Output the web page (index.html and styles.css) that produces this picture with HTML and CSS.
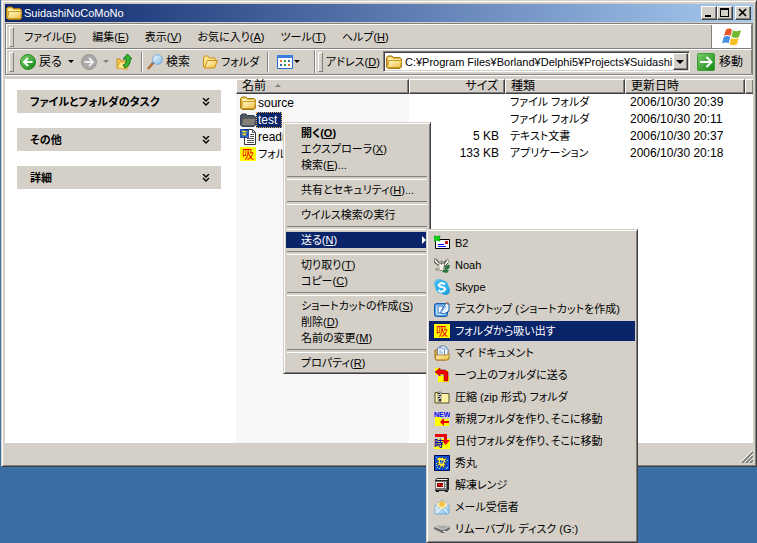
FILE: index.html
```html
<!DOCTYPE html>
<html lang="ja">
<head>
<meta charset="utf-8">
<title>SuidashiNoCoMoNo</title>
<link rel="stylesheet" href="styles.css">
</head>
<body>
<svg class="defs" aria-hidden="true">
  <defs>
    <linearGradient id="gold" x1="0" y1="0" x2="1" y2="1"><stop offset="0" stop-color="#fffbd0"/><stop offset="1" stop-color="#f0bd3c"/></linearGradient>
    <linearGradient id="green" x1="0" y1="0" x2="1" y2="1"><stop offset="0" stop-color="#7bd06a"/><stop offset="1" stop-color="#128512"/></linearGradient>
    <linearGradient id="sky" x1="0" y1="0" x2="1" y2="1"><stop offset="0" stop-color="#f4fcff"/><stop offset="1" stop-color="#7dbbe6"/></linearGradient>
    <symbol id="folder" viewBox="0 0 16 16">
      <path d="M.5 13V3.500L2 2h4l1.500 1.500H14L15.500 5v8L14 14.500H2z" fill="#e9b43c" stroke="#a77b13"/>
      <path d="M2 5V3.500h4L7.500 5H14v1H2z" fill="#fff3a8"/>
      <path d="M1.500 13.500 3 6.500h12.500l-1 7z" fill="url(#gold)" stroke="#c99829"/>
    </symbol>
    <symbol id="folder-open" viewBox="0 0 16 16">
      <path d="M1.500 13V3.500L3 2h3l1.500 2H13v9z" fill="#fbe28b" stroke="#d08d16"/>
      <path d="M2.500 14 5.500 6.500h10L12.500 14z" fill="url(#gold)" stroke="#d08d16"/>
    </symbol>
    <symbol id="hidemaru" viewBox="0 0 16 16">
      <path d="M.5.5h15v15H.5z" fill="#0a50e8" stroke="#000a50"/>
      <path d="M2 5 5 2l2 1 2-1 1 2 4-2-3 4 3 1-4 1 3 3-3-1 1 4-3-3-2 3v-4l-4 2 3-4-3 1 3-3-2-1z" fill="#ffee31" stroke="#000c6b" stroke-width=".5"/>
      <path d="m6 5 2 1 2-1-1 3-2 1-1-2z" fill="#0a50e8"/>
      <path d="M7 7h1v1H7zM3 12h1v1H3zm9 1h1v1h-1zM2 8h1v1H2z" fill="#ffee31"/>
      <path d="M2 2h1v1H2zm11 3h1v1h-1zM2 10h1v1H2zm3 3h1v1H5zm8-1h1v1h-1z" fill="#6ff"/>
    </symbol>
    <symbol id="chevrons" viewBox="0 0 8 8"><path d="m1 0 3 3 3-3M1 4l3 3 3-3" fill="none" stroke="#000" stroke-width="1.400"/></symbol>
  </defs>
</svg>

<main class="window">
  <header class="titlebar">
    <svg class="icon"><use href="#folder"/></svg>
    <h1>SuidashiNoCoMoNo</h1>
    <div class="caption-buttons">
      <button type="button" aria-label="最小化"><svg viewBox="0 0 12 10"><path d="M2 7h6v2H2z"/></svg></button>
      <button type="button" aria-label="最大化"><svg viewBox="0 0 12 10"><path d="M1 0h9v9H1zm1 2v6h7V2z" fill-rule="evenodd"/></svg></button>
      <button type="button" class="close" aria-label="閉じる"><svg viewBox="0 0 12 10"><path d="m2 1 7 7m0-7L2 8" stroke="#000" stroke-width="1.700"/></svg></button>
    </div>
  </header>

  <div class="bars">
    <div class="bar menu-row">
      <nav class="menubar grip">
        <button type="button">ファイル(<u>F</u>)</button>
        <button type="button">編集(<u>E</u>)</button>
        <button type="button">表示(<u>V</u>)</button>
        <button type="button">お気に入り(<u>A</u>)</button>
        <button type="button">ツール(<u>T</u>)</button>
        <button type="button">ヘルプ(<u>H</u>)</button>
      </nav>
      <div class="brand">
        <svg viewBox="0 0 20 18">
          <path d="M4 1.500q3.500-2 6 .2L8.500 8Q5.500 6 2 7.800z" fill="#e9572b"/>
          <path d="M11 2.300q3 2 8 0L17 9q-4 2-7.500-.2z" fill="#76b82f"/>
          <path d="M1.800 9q3-2 6.500 0l-1.700 6.300Q4 13.500 0 15.300z" fill="#4a8fe0"/>
          <path d="M9.200 10q4 2 7.500 0L15 16.300q-4 2-7.500-.3z" fill="#f8bf22"/>
        </svg>
      </div>
    </div>
    <div class="bar tool-row">
      <div class="toolbar grip">
        <button type="button" class="back"><svg class="icon" viewBox="0 0 16 16"><circle cx="8" cy="8" r="7.500" fill="url(#green)" stroke="#278c22"/><path d="M12.500 8H4.500M8 4 4 8l4 4" stroke="#fff" stroke-width="2" fill="none"/></svg>戻る</button>
        <button type="button" class="drop" aria-label="戻るの履歴"><i class="tri"></i></button>
        <button type="button" class="forward" aria-label="進む"><svg class="icon" viewBox="0 0 16 16"><circle cx="8" cy="8" r="7.500" fill="#aaa9a7" stroke="#969592"/><path d="M3.500 8h8M8 4l4 4-4 4" stroke="#eee" stroke-width="2" fill="none"/></svg></button>
        <button type="button" class="drop" aria-label="進むの履歴"><i class="tri dim"></i></button>
        <button type="button" class="up" aria-label="上へ"><svg class="icon" viewBox="0 0 16 16"><path d="M1 14V5h3l1 2h6v8z" fill="#f7ce51" stroke="#c78d18"/><path d="m1 14 3-6h10l-3 7z" fill="#ffe68a" stroke="#dba52d"/><path d="M7 11q4-1 3-6H7l4.500-5L16 5h-2q1 6-5 9z" fill="#36b52e" stroke="#16731b"/></svg></button>
        <span class="rule"></span>
        <button type="button" class="search"><svg class="icon" viewBox="0 0 16 16"><path d="m6 9-5 6" stroke="#b97135" stroke-width="2.600"/><path d="m7 8-2 2" stroke="#777" stroke-width="2"/><circle cx="10.500" cy="5.500" r="4.800" fill="url(#sky)" stroke="#75a7dd"/></svg>検索</button>
        <button type="button" class="folders"><svg class="icon"><use href="#folder-open"/></svg>フォルダ</button>
        <span class="rule"></span>
        <button type="button" class="views" aria-label="表示"><svg class="icon" viewBox="0 0 16 16"><path d="M.5 1.500h15v13H.5z" fill="#fff" stroke="#2868cf"/><path d="M0 1h16v3H0z" fill="#3c7ce1"/><path d="M3 6h2v2H3zm8 4h2v2h-2z" fill="#e66b28"/><path d="M7 6h2v2H7zm0 4h2v2H7z" fill="#2e9d47"/><path d="M11 6h2v2h-2zM3 10h2v2H3z" fill="#3265a8"/></svg><i class="tri"></i></button>
      </div>
      <form class="address grip">
        <label for="addr">アドレス(<u>D</u>)</label>
        <div class="combo">
          <svg class="icon"><use href="#folder"/></svg>
          <input id="addr" type="text" value="C:¥Program Files¥Borland¥Delphi5¥Projects¥SuidashiNoCoMoNo">
          <button type="button" aria-label="アドレス一覧"><i class="tri big"></i></button>
        </div>
        <button type="button" class="go"><svg viewBox="0 0 18 18"><rect x=".5" y=".5" width="17" height="17" rx="1" fill="url(#green)" stroke="#3b9d36"/><path d="M3 9h11M9.500 4l5 5-5 5" fill="none" stroke="#fff" stroke-width="2"/></svg>移動</button>
      </form>
    </div>
  </div>

  <div class="content">
    <aside class="tasks">
      <button type="button">ファイルとフォルダのタスク<svg><use href="#chevrons"/></svg></button>
      <button type="button">その他<svg><use href="#chevrons"/></svg></button>
      <button type="button">詳細<svg><use href="#chevrons"/></svg></button>
    </aside>
    <section class="files">
      <table>
        <colgroup><col class="c-name"><col class="c-size"><col class="c-type"><col class="c-date"><col></colgroup>
        <thead>
          <tr><th>名前 <i class="sort"></i></th><th class="num">サイズ</th><th>種類</th><th>更新日時</th><th></th></tr>
        </thead>
        <tbody>
          <tr><td><div class="file"><svg class="icon"><use href="#folder"/></svg><span>source</span></div></td><td class="num"></td><td class="type">ファイル フォルダ</td><td>2006/10/30 20:39</td><td></td></tr>
          <tr><td><div class="file selected"><svg class="icon" viewBox="0 0 16 16"><path d="M.5 13V3.500L2 2h4l1.500 1.500H14L15.500 5v8L14 14.500H2z" fill="#51565d" stroke="#33435d"/><path d="M1.500 13.500 3 6.500h12.500l-1 7z" fill="#858179" stroke="#5a5d64"/></svg><span>test</span></div></td><td class="num"></td><td class="type">ファイル フォルダ</td><td>2006/10/30 20:11</td><td></td></tr>
          <tr><td><div class="file"><svg class="icon" viewBox="0 0 16 16"><path d="M4.500.5h8l3 3v12h-11z" fill="#fff" stroke="#333"/><path d="M12.500.5v3h3M10 5.500h4M10 7.500h4M7 9.500h7M7 11.500h7M7 13.500h7" fill="none" stroke="#555"/><use href="#hidemaru" width="9" height="9"/></svg><span>readme</span></div></td><td class="num">5 KB</td><td class="type">テキスト文書</td><td>2006/10/30 20:37</td><td></td></tr>
          <tr><td><div class="file"><b class="icon sui">吸</b><span class="type">フォルダ</span></div></td><td class="num">133 KB</td><td class="type">アプリケーション</td><td>2006/10/30 20:18</td><td></td></tr>
        </tbody>
      </table>
    </section>
  </div>
  <footer class="status"><svg viewBox="0 0 12 12"><path d="M1 12 12 1M5 12l7-7M9 12l3-3" stroke="#808080" stroke-width="2"/><path d="M0 11 11 0M4 11l8-8M8 11l4-4" stroke="#fff"/></svg></footer>
</main>

<menu class="popup context">
  <li><button type="button"><b>開く(<u>O</u>)</b></button></li>
  <li><button type="button">エクスプローラ(<u>X</u>)</button></li>
  <li><button type="button">検索(<u>E</u>)...</button></li>
  <li class="separator"></li>
  <li><button type="button">共有とセキュリティ(<u>H</u>)...</button></li>
  <li class="separator"></li>
  <li><button type="button">ウイルス検索の実行</button></li>
  <li class="separator"></li>
  <li><button type="button" class="active">送る(<u>N</u>)<i class="more"></i></button></li>
  <li class="separator"></li>
  <li><button type="button">切り取り(<u>T</u>)</button></li>
  <li><button type="button">コピー(<u>C</u>)</button></li>
  <li class="separator"></li>
  <li><button type="button">ショートカットの作成(<u>S</u>)</button></li>
  <li><button type="button">削除(<u>D</u>)</button></li>
  <li><button type="button">名前の変更(<u>M</u>)</button></li>
  <li class="separator"></li>
  <li><button type="button">プロパティ(<u>R</u>)</button></li>
</menu>

<menu class="popup sendto">
  <li><button type="button"><svg class="icon" viewBox="0 0 16 16"><path d="M1.500 4.500h14v9h-14z" fill="#fff" stroke="#000"/><path d="M11 6h3v3h-3z" fill="#d01818"/><path d="M4 9h6v1H4zm0 2h8v1H4z" fill="#11f"/><path d="M0 1h2l1 1 1-1h2v2L5 4l1 1v1H4L3 5 2 6H0V5l1-1-1-1z" fill="#0bd80b" stroke="#079307" stroke-width=".5"/></svg>B2</button></li>
  <li><button type="button"><svg class="icon" viewBox="0 0 16 16"><path d="M0 1q4 0 5 4 3-3 5 0l4-4 1 4-3 4-1 5H6L4 9 0 6z" fill="#8c9186"/><path d="m1 2 4 4-1 2-3-3zm13 0-3 5v2l3-3z" fill="#f3f3ec"/><path d="M6 6q2-2 4 1l-1 6H6l-1-4z" fill="#f1f1ea"/><path d="M7 6h1v1H7zM0 4l4 4M2 2l3 4M12 3l-2 4m4-1-4 4" stroke="#4a4f49" fill="#111"/><path d="M11 10q4-4 5-1-1 4-5 4zM10 13h5l-2 3-5-1z" fill="#28743d"/><path d="M1 11h3l1 3H2z" fill="#9c9f89"/></svg>Noah</button></li>
  <li><button type="button"><svg class="icon" viewBox="0 0 16 16"><circle cx="5" cy="5" r="5" fill="#55bff0"/><circle cx="11.500" cy="11.500" r="4.500" fill="#229edc"/><circle cx="8" cy="8" r="6.700" fill="#2eb1ed"/><path d="M11 5.500Q8 3 5.500 5T8 8t2 3.500T4.500 11" fill="none" stroke="#fff" stroke-width="2"/></svg>Skype</button></li>
  <li><button type="button"><svg class="icon" viewBox="0 0 16 16"><rect x=".5" y="2.500" width="13" height="13" rx="2" fill="#4d9be0" stroke="#155cac"/><rect x="2" y="4" width="10" height="10" rx="2" fill="#c9e5fa"/><path d="M4 5h5v7H4z" fill="#fff" stroke="#2672bd"/><path d="m7 10 5-8 3 1v7l-5 3-3-1z" fill="#e6f3ff" stroke="#1c62ab"/><path d="m8 10 4-5" stroke="#4e91d0"/><path d="m12 2 2-1 1 2-1 1z" fill="#c55a43"/></svg>デスクトップ (ショートカットを作成)</button></li>
  <li><button type="button" class="active"><b class="icon sui">吸</b>フォルダから吸い出す</button></li>
  <li><button type="button"><svg class="icon" viewBox="0 0 16 16"><path d="M1 5h13v9l-2 1H2l-1-2z" fill="#dca635" stroke="#a67322"/><path d="M6 1h5l3 3v8H6z" fill="#fff" stroke="#607eab"/><path d="M3.500 3h5l2 2v7h-7z" fill="#eef6ff" stroke="#6987b2"/><path d="M5 6h3M5 8h4M11 1v3h3" fill="none" stroke="#7cabda"/><path d="M1 10h12l2-2v6l-2 1H2z" fill="url(#gold)" stroke="#ad7e26"/></svg>マイ ドキュメント</button></li>
  <li><button type="button"><svg class="icon" viewBox="0 0 16 16"><path d="M1 1h5v2h8v5H1zm3 8h11v6H4z" fill="#ff0"/><path d="m1 5 5-4v2h5l3 2v9h-4V7H6v2z" fill="#f00000" stroke="#850000" stroke-width=".6"/></svg>一つ上のフォルダに送る</button></li>
  <li><button type="button"><svg class="icon" viewBox="0 0 16 16"><path d="M1 3.500h5l2 1h7v9.500H1z" fill="#ffe77d" stroke="#55563a"/><path d="M2 5h12v8H2z" fill="#fff1a2"/><path d="M4 3h3v10H4z" fill="#ddd" stroke="#555" stroke-width=".6"/><path d="M4 4h2v1H4zm1 2h2v1H5zM4 8h2v1H4zm1 2h2v2H5z" fill="#222"/></svg>圧縮 (zip 形式) フォルダ</button></li>
  <li><button type="button"><svg class="icon" viewBox="0 0 16 16"><path d="M1 6h5l2 2h7v7H1z" fill="#ff0"/><text x="0" y="6" class="new-label">NEW</text><path d="m6 11 4-4v3h5v2h-5v3z" fill="#e00"/></svg>新規フォルダを作り、そこに移動</button></li>
  <li><button type="button"><svg class="icon" viewBox="0 0 16 16"><path d="M0 6h16v10H0z" fill="#ff0"/><path d="M1 1h12v6h3l-4.500 5L8 7h2V4H1z" fill="#e00"/><text x="0" y="14" class="time-label">時</text></svg>日付フォルダを作り、そこに移動</button></li>
  <li><button type="button"><svg class="icon"><use href="#hidemaru"/></svg>秀丸</button></li>
  <li><button type="button"><svg class="icon" viewBox="0 0 16 16"><path d="m1 3 2-2h12v12l-2 1H1z" fill="#222"/><path d="m2 3 1-1h11l-1 1z" fill="#eee"/><path d="M1 4h12v9H1z" fill="#777"/><path d="M2 5h8v6H2z" fill="#eee"/><path d="M3 6h6v4H3z" fill="#9d0000"/><path d="M4 7h2v1H4zm3 1h2v1H7z" fill="#ff3c19"/><path d="M11 5h1v2h-1zm0 3h1v1h-1zm0 2h1v1h-1z" fill="#fff"/><path d="M2 14h3v1H2zm9 0h3v1h-3z" fill="#111"/></svg>解凍レンジ</button></li>
  <li><button type="button"><svg class="icon" viewBox="0 0 16 16"><path d="m1 6 7-5 7 5v8l-2 1H1z" fill="#c2dff2" stroke="#8eb4d2" stroke-width=".7"/><path d="M3 4h10v6H3z" fill="#fff0b2"/><circle cx="8" cy="5" r="3" fill="#f6c44b"/><path d="m1 6 7 5 7-5v8l-2 1H1z" fill="url(#sky)" stroke="#83add0" stroke-width=".7"/><path d="m2 14 5-4m7 4-4-4" stroke="#fff"/></svg>メール受信者</button></li>
  <li><button type="button"><svg class="icon" viewBox="0 0 16 16"><path d="m0 6 6-2h8l2 2v2l-6 4H8L0 8z" fill="#6d6d6d"/><path d="m0 6 6-2h8l2 2-6 3H8z" fill="#c9c9c7"/><path d="m3 6 4-1h6l1 1-4 2H8z" fill="#aaa"/><path d="M9 10h3v1H9z" fill="#eee"/></svg>リムーバブル ディスク (G:)</button></li>
</menu>
</body>
</html>
```
FILE: styles.css
```css
* { box-sizing: border-box; }

:root {
  --face: #d4d0c8;
  --shadow: #808080;
  --dark: #404040;
  --select: #0a246a;
}

body {
  margin: 0;
  min-height: 100vh;
  overflow: hidden;
  background: #3a6ea5;
  color: #000;
  font: 11px/16px "Liberation Sans", "Noto Sans CJK JP", sans-serif;
  font-feature-settings: "palt";
}

button, input {
  font: inherit;
  font-feature-settings: inherit;
  color: inherit;
  margin: 0;
  padding: 0;
  border: 0;
  background: none;
  white-space: nowrap;
}

u { text-underline-offset: 1px; }
svg { flex: none; display: block; }
.defs { position: absolute; width: 0; height: 0; }
.icon { width: 16px; height: 16px; flex: none; }

.window {
  display: flex;
  flex-direction: column;
  height: 86vh;
  margin-left: 1px;
  padding: 2px;
  background: var(--face);
  border: 1px solid var(--face);
  border-right-color: var(--dark);
  border-bottom-color: var(--dark);
  box-shadow: inset 1px 1px #fff, inset -1px -1px var(--shadow);
}

.titlebar {
  display: flex;
  align-items: center;
  gap: 2px;
  height: 18px;
  margin: 1px;
  padding: 0 2px 0 1px;
  flex: none;
  color: #fff;
  background: linear-gradient(90deg, #0a246a, #a6caf0);
}
.titlebar h1 { flex: 1; margin: 0; font-size: 11px; font-weight: normal; }
.caption-buttons { display: flex; }
.caption-buttons button {
  width: 16px;
  height: 14px;
  padding: 1px;
  background: var(--face);
  border: 1px solid;
  border-color: #fff var(--dark) var(--dark) #fff;
  box-shadow: inset -1px -1px var(--shadow);
}
.caption-buttons svg { width: 12px; height: 10px; }
.caption-buttons .close { margin-left: 2px; }

.bars {
  flex: none;
  margin: 0 1px 4px;
  border: 1px solid var(--shadow);
  box-shadow: 0 1px #fff;
}
.bar { display: flex; border: 1px solid; border-color: #fff var(--shadow) var(--shadow) #fff; }
.menu-row { height: 25px; }
.tool-row { height: 25px; border-bottom-color: var(--face); }

.grip { display: flex; align-items: center; }
.grip::before {
  content: "";
  width: 3px;
  height: 18px;
  margin-left: 2px;
  flex: none;
  border: 1px solid;
  border-color: #fff var(--shadow) var(--shadow) #fff;
}
.menubar { flex: 1; }
.menubar button { padding: 0 8px; }
.menubar button:first-child { margin-left: 2px; }
.brand {
  display: grid;
  place-items: center;
  width: 40px;
  background: #fff;
  border-left: 1px solid var(--shadow);
}
.brand svg { width: 20px; height: 18px; }

.toolbar { width: 308px; flex: none; border-right: 1px solid var(--shadow); }
.toolbar button { display: flex; align-items: center; flex: none; gap: 3px; height: 20px; }
.toolbar .back { width: 48px; margin-left: 6px; }
.toolbar .drop { width: 13px; }
.toolbar .forward { width: 22px; }
.toolbar .up { width: 20px; }
.toolbar .search { width: 55px; }
.toolbar .folders { width: 60px; }
.toolbar .search, .toolbar .back, .go { font-size: 12px; }
.toolbar .search { margin-left: -1px; }
.rule { width: 2px; height: 20px; margin: 0 5px; flex: none; border-left: 1px solid var(--shadow); border-right: 1px solid #fff; }
.toolbar .views { margin-left: 3px; gap: 1px; }

.tri { display: block; border: 3px solid transparent; border-top-color: #000; border-bottom: 0; }
.tri.big { border-width: 4px 4px 0; }
.tri.dim { border-top-color: var(--shadow); }

.address { flex: 1; min-width: 0; border-left: 1px solid #fff; }
.address label { width: 60px; padding-left: 3px; flex: none; white-space: nowrap; }
.combo {
  display: flex;
  align-items: center;
  flex: 1;
  min-width: 0;
  height: 21px;
  padding-left: 2px;
  background: #fff;
  border: 1px solid;
  border-color: var(--shadow) #fff #fff var(--shadow);
  box-shadow: inset 1px 1px var(--dark), inset -1px -1px var(--face);
}
.combo input { flex: 1; min-width: 0; margin-left: 3px; height: 16px; outline: 0; }
.combo button {
  display: grid;
  place-items: center;
  width: 15px;
  height: 17px;
  margin-right: 1px;
  background: var(--face);
  border: 1px solid;
  border-color: #fff var(--dark) var(--dark) #fff;
  box-shadow: inset -1px -1px var(--shadow);
}
.go { display: flex; align-items: center; gap: 4px; margin: 0 8px 0 7px; }
.go svg { width: 18px; height: 18px; }

.content { display: flex; flex: 1; min-height: 0; margin: 0 1px; background: #fff; }
.tasks { display: flex; flex-direction: column; gap: 15px; width: 231px; padding: 11px 15px 0 12px; flex: none; }
.tasks button {
  display: flex;
  justify-content: space-between;
  align-items: center;
  height: 23px;
  padding: 0 11px 0 13px;
  background: var(--face);
  font-weight: bold;
}
.tasks svg { width: 8px; height: 8px; }

.files {
  flex: 1;
  min-width: 0;
  background: linear-gradient(#f7f7f7, #f7f7f7) 0 0 / 173px 100% no-repeat;
}
table { width: 100%; table-layout: fixed; border-collapse: separate; border-spacing: 0; font-size: 12px; }
.c-name { width: 173px; }
.c-size { width: 96px; }
.c-type, .c-date { width: 120px; }
th, td { padding: 0 5px; text-align: left; font-weight: normal; white-space: nowrap; }
th {
  height: 15px;
  line-height: 13px;
  background: var(--face);
  border: 1px solid;
  border-color: #fff var(--dark) var(--dark) #fff;
  box-shadow: inset -1px -1px var(--shadow);
}
td { height: 17px; line-height: 17px; }
.type { font-size: 11px; }
th:last-child { border-right: 0; }
.num { text-align: right; padding-right: 6px; }
.sort { display: inline-block; margin: 0 0 3px 6px; border: 3px solid transparent; border-bottom-color: var(--shadow); border-top: 0; }
.file { display: flex; align-items: center; margin-left: -1px; }
.file span { padding: 0 2px; line-height: 16px; }
.file.selected span { background: var(--select); color: #fff; outline: 1px dotted #e0b25c; outline-offset: -1px; padding-right: 5px; }

.sui {
  display: grid;
  place-content: center;
  height: 14px;
  background: #ff0;
  color: #f00000;
  font: 12px/14px "Noto Sans CJK JP", sans-serif;
}

.status { display: flex; align-items: flex-end; justify-content: flex-end; height: 21px; flex: none; padding: 1px; }
.status svg { width: 12px; height: 12px; }

.popup {
  position: absolute;
  margin: 0;
  padding: 2px;
  list-style: none;
  background: var(--face);
  border: 1px solid;
  border-color: var(--face) var(--dark) var(--dark) var(--face);
  box-shadow: inset 1px 1px #fff, inset -1px -1px var(--shadow);
}
.popup button { display: flex; align-items: center; width: 100%; text-align: left; }
.popup .active { background: var(--select); color: #fff; }

.context { left: 283px; top: 122px; width: 148px; }
.context button { height: 16px; padding: 0 2px 0 15px; }
.separator { height: 9px; padding: 3px 1px 0; }
.separator::before { content: ""; display: block; height: 2px; border-top: 1px solid var(--shadow); border-bottom: 1px solid #fff; }
.more { margin-left: auto; border: 4px solid transparent; border-left-color: #fff; border-right: 0; }

.sendto { left: 426px; top: 229px; width: 212px; }
.sendto li { padding: 1px 0; }
.sendto button { gap: 5px; height: 20px; padding-left: 5px; }

.new-label { font: bold 7px "Liberation Sans", sans-serif; fill: #00f; }
.time-label { font: bold 9px "Noto Sans CJK JP", sans-serif; fill: #00c; }
```
